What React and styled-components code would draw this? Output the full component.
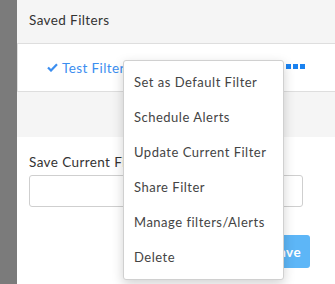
import React from 'react';
import styled, {createGlobalStyle} from 'styled-components';

const GlobalStyle = createGlobalStyle`
  html, body {
    margin: 0;
    padding: 0;
    background: #ffffff;
    font-family: Lato, "Open Sans", sans-serif;
    letter-spacing: 0.4px;
    overflow: hidden;
  }
`;

const Page = styled.div`
  display: flex;
  width: 335px;
  height: 284px;
  position: relative;
`;

const SideStrip = styled.div`
  width: 17px;
  flex: none;
  background: #7b7b7b;
`;

const Panel = styled.div`
  flex: 1;
  display: flex;
  flex-direction: column;
  min-width: 0;
`;

const Header = styled.div`
  height: 44px;
  box-sizing: border-box;
  padding: 12px 0 0 12px;
  background: #f5f5f5;
  border-bottom: 1px solid #dedede;
  color: #333;
  font-size: 13.5px;
`;

const FilterRow = styled.div`
  height: 48px;
  box-sizing: border-box;
  display: flex;
  align-items: center;
  padding: 0 0 0 29px;
  border-left: 1px solid #e0e0e0;
  border-bottom: 1px solid #dedede;
  background: #fff;
`;

const FilterName = styled.span`
  color: #3b8ef0;
  font-size: 13.5px;
  display: flex;
  align-items: center;
  gap: 4px;
`;

const Dots = styled.div`
  margin-left: auto;
  margin-right: 30px;
  display: flex;
  gap: 2px;
  padding-bottom: 3px;
  span {
    width: 5px;
    height: 5px;
    background: #1a82f0;
  }
`;

const Spacer = styled.div`
  height: 45px;
  background: #f5f5f5;
`;

const SaveSection = styled.div`
  padding: 17px 32px 0 12px;
  display: flex;
  flex-direction: column;
`;

const Label = styled.label`
  color: #333;
  font-size: 13.5px;
  margin-bottom: 5px;
`;

const Input = styled.input`
  height: 32px;
  box-sizing: border-box;
  border: 1px solid #cfcfcf;
  border-radius: 3px;
  font: inherit;
`;

const ButtonRow = styled.div`
  display: flex;
  justify-content: flex-end;
  margin-top: 28px;
  margin-right: -7px;
`;

const SaveButton = styled.button`
  height: 33px;
  padding: 0 9px 0 12px;
  background: #5db6f7;
  color: #fff;
  border: none;
  border-radius: 3px;
  font-family: inherit;
  letter-spacing: 0.4px;
  font-size: 13.5px;
  font-weight: 700;
`;

const Menu = styled.ul`
  position: absolute;
  left: 123px;
  top: 60px;
  width: 161px;
  height: 220px;
  box-sizing: border-box;
  margin: 0;
  padding: 3px 0 0;
  list-style: none;
  background: #fff;
  border: 1px solid #d0d0d0;
  border-radius: 3px;
  box-shadow: 0 4px 12px rgba(0, 0, 0, 0.18);
`;

const MenuItem = styled.li`
  height: 35px;
  display: flex;
  align-items: center;
  padding-left: 10px;
  color: #444;
  font-size: 13px;
  letter-spacing: 0.5px;
`;

const CheckIcon = () => (
  <svg width="11" height="9" viewBox="0 0 11 9">
    <path d="M1 4.5 L4 7.5 L10 1.2" fill="none" stroke="#3b8ef0" strokeWidth="2.2" />
  </svg>
);

const menuItems = [
  'Set as Default Filter',
  'Schedule Alerts',
  'Update Current Filter',
  'Share Filter',
  'Manage filters/Alerts',
  'Delete'
];

export default function App() {
  return (
    <Page>
      <GlobalStyle />
      <SideStrip />
      <Panel>
        <Header>Saved Filters</Header>
        <FilterRow>
          <FilterName>
            <CheckIcon />
            Test Filter
          </FilterName>
          <Dots>
            <span />
            <span />
            <span />
          </Dots>
        </FilterRow>
        <Spacer />
        <SaveSection>
          <Label>Save Current Filter</Label>
          <Input type="text" />
          <ButtonRow>
            <SaveButton>Save</SaveButton>
          </ButtonRow>
        </SaveSection>
      </Panel>
      <Menu>
        {menuItems.map(item => (
          <MenuItem key={item}>{item}</MenuItem>
        ))}
      </Menu>
    </Page>
  );
}
